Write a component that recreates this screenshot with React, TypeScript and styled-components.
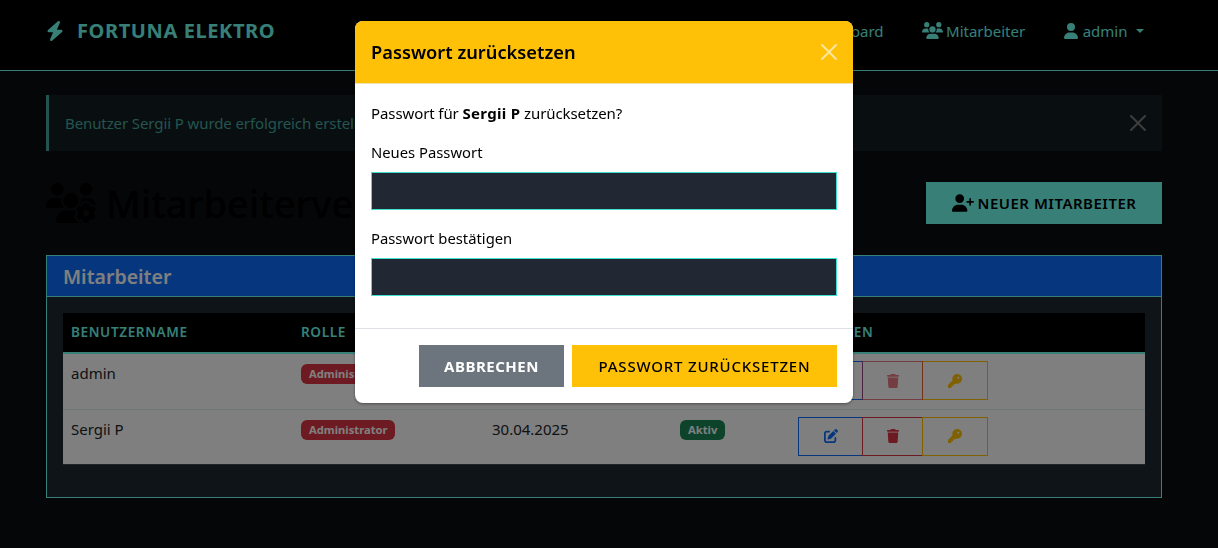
import styled, { createGlobalStyle } from "styled-components";
import {
  FaBolt,
  FaKey,
  FaPenToSquare,
  FaTrash,
  FaUser,
  FaUserPlus,
  FaUsers,
  FaUsersGear,
} from "react-icons/fa6";

const accent = "#6effef";

const employees = [
  { id: 1, name: "admin", role: "Administrator", created: "30.04.2025", locked: true },
  { id: 2, name: "Sergii P", role: "Administrator", created: "30.04.2025", locked: false },
];

const GlobalStyle = createGlobalStyle`
  * { box-sizing: border-box; }
  html, body { margin: 0; height: 100%; overflow: hidden; }
  body {
    background: #0a0c10;
    color: #000;
    font-family: "Noto Sans", "Open Sans", sans-serif;
    font-size: 16px;
    line-height: 24px;
  }
`;

const CloseIcon = ({ size = 16 }: { size?: number }) => (
  <svg width={size} height={size} viewBox="0 0 16 16" fill="currentColor">
    <path d="M.293.293a1 1 0 0 1 1.414 0L8 6.586 14.293.293a1 1 0 1 1 1.414 1.414L9.414 8l6.293 6.293a1 1 0 0 1-1.414 1.414L8 9.414l-6.293 6.293a1 1 0 0 1-1.414-1.414L6.586 8 .293 1.707a1 1 0 0 1 0-1.414z" />
  </svg>
);

export default function App() {
  return (
    <>
      <GlobalStyle />
      <Navbar>
        <Brand>
          <FaBolt size={20} />
          <span>FORTUNA ELEKTRO</span>
        </Brand>
        <NavLinks>
          <NavLink>Dashboard</NavLink>
          <NavLink>
            <FaUsers size={21} />
            Mitarbeiter
          </NavLink>
          <NavLink>
            <FaUser size={16} />
            admin
            <Caret />
          </NavLink>
        </NavLinks>
      </Navbar>
      <Main>
        <Alert>
          <span>Benutzer Sergii P wurde erfolgreich erstellt.</span>
          <AlertClose>
            <CloseIcon />
          </AlertClose>
        </Alert>
        <TitleRow>
          <Title>
            <FaUsersGear size={50} />
            Mitarbeiterverwaltung
          </Title>
          <PrimaryButton>
            <FaUserPlus size={22} />
            Neuer Mitarbeiter
          </PrimaryButton>
        </TitleRow>
        <Card>
          <CardHeader>Mitarbeiter</CardHeader>
          <CardBody>
            <Table>
              <thead>
                <tr>
                  <Th $width={230}>Benutzername</Th>
                  <Th $width={191}>Rolle</Th>
                  <Th $width={188}>Erstellt am</Th>
                  <Th $width={118}>Status</Th>
                  <Th>Aktionen</Th>
                </tr>
              </thead>
              <tbody>
                {employees.map((employee) => (
                  <Row key={employee.id}>
                    <Td>{employee.name}</Td>
                    <Td>
                      <Badge $color="#dc3545">{employee.role}</Badge>
                    </Td>
                    <Td>{employee.created}</Td>
                    <Td>
                      <Badge $color="#198754">Aktiv</Badge>
                    </Td>
                    <Td>
                      <ActionGroup>
                        <ActionButton $color="#0d6efd" $width={65}>
                          <FaPenToSquare size={14} />
                        </ActionButton>
                        <ActionButton $color="#dc3545" $width={61} $faded={employee.locked}>
                          <FaTrash size={14} />
                        </ActionButton>
                        <ActionButton $color="#ffc107" $width={66}>
                          <FaKey size={14} />
                        </ActionButton>
                      </ActionGroup>
                    </Td>
                  </Row>
                ))}
              </tbody>
            </Table>
          </CardBody>
        </Card>
      </Main>

      <Backdrop />
      <ModalLayer>
        <Dialog>
          <DialogHeader>
            <DialogTitle>Passwort zurücksetzen</DialogTitle>
            <DialogClose>
              <CloseIcon />
            </DialogClose>
          </DialogHeader>
          <DialogBody>
            <Question>
              Passwort für <strong>Sergii P</strong> zurücksetzen?
            </Question>
            <Field>
              <Label htmlFor="new-password">Neues Passwort</Label>
              <Input id="new-password" type="password" />
            </Field>
            <Field>
              <Label htmlFor="confirm-password">Passwort bestätigen</Label>
              <Input id="confirm-password" type="password" />
            </Field>
          </DialogBody>
          <DialogFooter>
            <CancelButton>Abbrechen</CancelButton>
            <ConfirmButton>Passwort zurücksetzen</ConfirmButton>
          </DialogFooter>
        </Dialog>
      </ModalLayer>
    </>
  );
}

const Navbar = styled.nav`
  height: 71px;
  display: flex;
  align-items: center;
  justify-content: space-between;
  padding: 0 74px 8px 45px;
  background: #000;
  border-bottom: 1px solid ${accent};
`;

const Brand = styled.div`
  display: flex;
  align-items: center;
  gap: 12px;
  color: ${accent};
  font-size: 20px;
  font-weight: 700;
  letter-spacing: 0.6px;
`;

const NavLinks = styled.div`
  display: flex;
  align-items: center;
  gap: 38px;
  margin-bottom: 1px;
`;

const NavLink = styled.a`
  display: flex;
  align-items: center;
  gap: 3.5px;
  color: ${accent};
  font-size: 15px;
`;

const Caret = styled.i`
  margin-left: 5px;
  border-top: 4.8px solid ${accent};
  border-left: 4.8px solid transparent;
  border-right: 4.8px solid transparent;
`;

const Main = styled.main`
  padding: 24px 56px 0 46px;
`;

const Alert = styled.div`
  height: 56px;
  display: flex;
  align-items: center;
  justify-content: space-between;
  padding: 0 16px;
  margin-bottom: 24px;
  background: #121c22;
  border-left: 3px solid #49a89e;
  color: #49a89e;
  font-size: 15px;
  letter-spacing: -0.1px;
`;

const AlertClose = styled.button`
  display: flex;
  padding: 0;
  background: none;
  border: 0;
  color: #7a7a7a;
`;

const TitleRow = styled.div`
  height: 56px;
  display: flex;
  align-items: center;
  justify-content: space-between;
  margin-bottom: 24px;
`;

const Title = styled.h1`
  display: flex;
  align-items: center;
  gap: 10px;
  margin: 0;
  font-size: 38px;
  font-weight: 500;
  color: #000;
`;

const SquareButton = styled.button`
  height: 42px;
  display: flex;
  align-items: center;
  justify-content: center;
  padding: 0;
  border: 0;
  border-radius: 0;
  font-family: inherit;
  font-size: 15px;
  font-weight: 600;
  letter-spacing: 0.5px;
  text-transform: uppercase;
`;

const PrimaryButton = styled(SquareButton)`
  width: 236px;
  gap: 4px;
  background: ${accent};
  color: #000;
`;

const Card = styled.section`
  border: 1px solid ${accent};
  background: #1e2830;
`;

const CardHeader = styled.h2`
  height: 41px;
  margin: 0;
  padding: 1px 16px 0;
  display: flex;
  align-items: center;
  background: #0d6efd;
  border-bottom: 1px solid ${accent};
  color: #fff;
  font-size: 19.5px;
  font-weight: 600;
`;

const CardBody = styled.div`
  padding: 16px;
`;

const Table = styled.table`
  width: 100%;
  margin-bottom: 16px;
  border-collapse: collapse;
  table-layout: fixed;
`;

const Th = styled.th<{ $width?: number }>`
  width: ${(p) => (p.$width ? `${p.$width}px` : "auto")};
  height: 40px;
  padding: 0 8px 2px;
  background: #000;
  border-bottom: 2px solid ${accent};
  color: ${accent};
  font-size: 13.6px;
  font-weight: 600;
  letter-spacing: 0.6px;
  text-align: left;
  text-transform: uppercase;
`;

const Row = styled.tr`
  height: 56px;
  background: #fff;
  border-bottom: 1px solid #d8f0ec;

  &:last-child {
    height: 55px;
    border-bottom-color: #3a4a52;
  }
`;

const Td = styled.td`
  padding: 7px 8px 6px;
  vertical-align: top;
  font-size: 15px;
  color: #212529;
`;

const Badge = styled.span<{ $color: string }>`
  display: inline-block;
  padding: 3px 8px;
  border-radius: 6px;
  background: ${(p) => p.$color};
  color: #fff;
  font-size: 11.2px;
  font-weight: 700;
  line-height: 14px;
  vertical-align: 1px;
`;

const ActionGroup = styled.div`
  display: flex;
`;

const ActionButton = styled.button<{ $color: string; $width: number; $faded?: boolean }>`
  width: ${(p) => p.$width}px;
  height: 39px;
  margin-left: -1px;
  display: flex;
  align-items: center;
  justify-content: center;
  padding: 0;
  background: transparent;
  border: 1px solid ${(p) => p.$color};
  color: ${(p) => p.$color};
  opacity: ${(p) => (p.$faded ? 0.65 : 1)};

  &:first-child {
    margin-left: 0;
  }
`;

const Backdrop = styled.div`
  position: fixed;
  inset: 0;
  background: rgba(0, 0, 0, 0.5);
`;

const ModalLayer = styled.div`
  position: fixed;
  inset: 0;
  display: flex;
  justify-content: center;
  align-items: flex-start;
  padding: 21px 10px 0 0;
`;

const Dialog = styled.div`
  width: 498px;
  background: #fff;
  border-radius: 8px;
  box-shadow: 0 1px 3px rgba(0, 0, 0, 0.4);
  overflow: hidden;
`;

const DialogHeader = styled.header`
  height: 63px;
  display: flex;
  align-items: center;
  justify-content: space-between;
  padding: 0 16px;
  background: #ffc107;
  border-bottom: 1px solid #f3e3ae;
`;

const DialogTitle = styled.h5`
  margin: 0;
  font-size: 18.25px;
  font-weight: 600;
  color: #000;
`;

const DialogClose = styled.button`
  display: flex;
  padding: 0;
  background: none;
  border: 0;
  color: rgba(255, 255, 255, 0.6);
`;

const DialogBody = styled.div`
  padding: 17px 16px 32px;
`;

const Question = styled.p`
  margin: 0 0 15px;
  font-size: 15px;
  letter-spacing: -0.1px;
  color: #000;

  & strong {
    letter-spacing: 0.3px;
  }
`;

const Field = styled.div`
  & + & {
    margin-top: 16px;
  }
`;

const Label = styled.label`
  display: block;
  margin-bottom: 8px;
  font-size: 14.8px;
  color: #000;
`;

const Input = styled.input`
  display: block;
  width: 100%;
  height: 38px;
  padding: 0 12px;
  background: #212833;
  border: 1px solid #40e0d0;
  border-radius: 0;
`;

const DialogFooter = styled.footer`
  display: flex;
  justify-content: flex-end;
  gap: 8px;
  padding: 16px;
  border-top: 1px solid #dee2e6;
`;

const CancelButton = styled(SquareButton)`
  width: 145px;
  background: #6c757d;
  color: #fff;
  font-weight: 700;
`;

const ConfirmButton = styled(SquareButton)`
  width: 265px;
  background: #ffc107;
  color: #000;
  font-weight: 500;
  letter-spacing: 0.8px;
`;
